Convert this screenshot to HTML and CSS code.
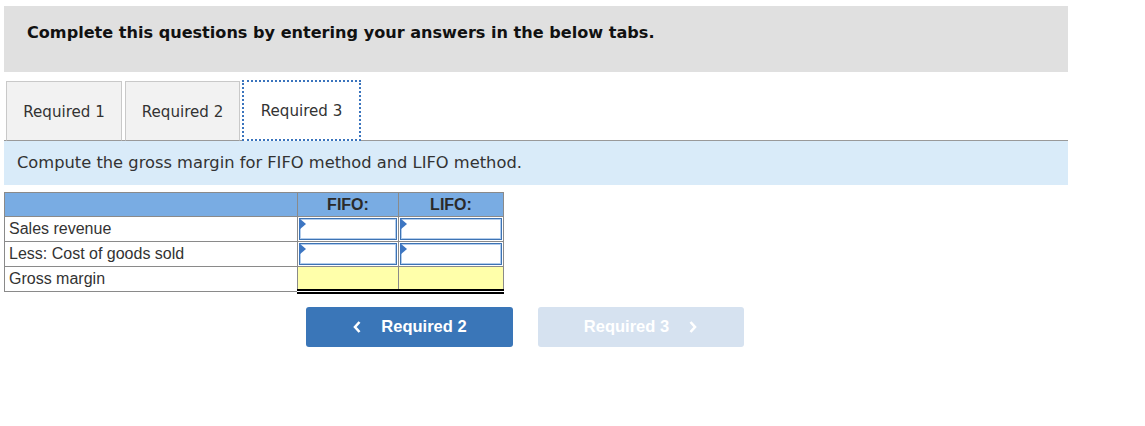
FILE: index.html
```html
<!DOCTYPE html>
<html>
<head>
<meta charset="utf-8">
<link rel="stylesheet" href="styles.css">
</head>
<body>
<div class="page">
  <div class="header">Complete this questions by entering your answers in the below tabs.</div>
  <div class="tabs">
    <div class="tab t1">Required 1</div>
    <div class="tab t2">Required 2</div>
    <div class="tab t3 active">Required 3</div>
  </div>
  <div class="instr">Compute the gross margin for FIFO method and LIFO method.</div>
  <table class="grid">
    <tr class="head">
      <td class="label"></td>
      <td class="c1">FIFO:</td>
      <td class="c2">LIFO:</td>
    </tr>
    <tr>
      <td class="label">Sales revenue</td>
      <td class="in"><div class="box"><span class="tri"></span></div></td>
      <td class="in"><div class="box"><span class="tri"></span></div></td>
    </tr>
    <tr>
      <td class="label">Less: Cost of goods sold</td>
      <td class="in"><div class="box"><span class="tri"></span></div></td>
      <td class="in"><div class="box"><span class="tri"></span></div></td>
    </tr>
    <tr>
      <td class="label">Gross margin</td>
      <td class="total"></td>
      <td class="total"></td>
    </tr>
  </table>
  <div class="nav">
    <div class="btn prev">
      <svg width="10" height="14" viewBox="0 0 10 14"><path d="M7.5 2 L3 7 L7.5 12" fill="none" stroke="#fff" stroke-width="2.6"/></svg>
      <span>Required 2</span>
    </div>
    <div class="btn next">
      <span>Required 3</span>
      <svg width="10" height="14" viewBox="0 0 10 14"><path d="M2.5 2 L7 7 L2.5 12" fill="none" stroke="#fff" stroke-width="2.6"/></svg>
    </div>
  </div>
</div>
</body>
</html>
```
FILE: styles.css
```css
html, body {
  margin: 0;
  padding: 0;
  background: #fff;
}
.page {
  padding: 6px 0 0 4px;
  width: 1064px;
  font-family: "DejaVu Sans", Verdana, sans-serif;
  color: #222;
}
.header {
  background: #e0e0e0;
  height: 66px;
  box-sizing: border-box;
  padding: 17px 0 0 23px;
  font-size: 16.1px;
  font-weight: bold;
  color: #111;
}
.tabs {
  display: flex;
  margin-top: 9px;
  padding-left: 2px;
  border-bottom: 1px solid #999;
  height: 59px;
}
.tab {
  box-sizing: border-box;
  height: 60px;
  margin-bottom: -1px;
  background: #f2f2f2;
  border: 1px solid #c9c9c9;
  border-bottom: 1px solid #999;
  display: flex;
  align-items: center;
  justify-content: center;
  font-size: 15.1px;
  color: #333;
  padding-top: 1px;
}
.t1 { width: 116px; }
.t2 { width: 115px; margin-left: 3px; }
.t3 { width: 119px; margin-left: 2px; }
.tab.active {
  background: #fff;
  border: 2px dotted #3a74bd;
  height: 61px;
  margin-top: -1px;
}
.instr {
  background: #d9ebf9;
  height: 44px;
  box-sizing: border-box;
  padding: 12px 0 0 13px;
  font-size: 16.3px;
  color: #333;
}
.grid {
  margin-top: 7px;
  border-collapse: collapse;
  font-family: "Liberation Sans", Arial, sans-serif;
  font-size: 16px;
  color: #333;
}
.grid td {
  border: 1px solid #8a8a8a;
  height: 24.3px;
  padding: 0;
  box-sizing: border-box;
}
.grid .label {
  width: 293px;
  padding-left: 4px;
  background: #fff;
}
.grid .head td {
  background: #79ace3;
  font-weight: bold;
  text-align: center;
  color: #2a2a2a;
}
.grid .head .label { background: #79ace3; }
.c1 { width: 101px; }
.c2 { width: 105px; }
.grid .in {
  padding: 1px;
  background: #fff;
}
.box {
  position: relative;
  height: 22px;
  box-sizing: border-box;
  border: 1px solid #3d73b4;
  box-shadow: inset 0 0 0 1px #b3cdec;
  background: #fff;
}
.tri {
  position: absolute;
  left: -1px;
  top: -1px;
  width: 0;
  height: 0;
  border-top: 6px solid transparent;
  border-bottom: 6px solid transparent;
  border-left: 7px solid #3d76c2;
}
.grid .total {
  background: #ffffaa;
  border-bottom: 5px double #000;
}
.nav {
  display: flex;
  margin: 13px 0 0 302px;
  gap: 25px;
}
.btn {
  width: 207px;
  height: 40px;
  border-radius: 3px;
  display: flex;
  align-items: center;
  justify-content: center;
  gap: 19px;
  font-family: "Liberation Sans", Arial, sans-serif;
  font-size: 16.5px;
  font-weight: bold;
  color: #fff;
}
.prev { background: #3a76b8; }
.next { background: #d6e2f0; width: 206px; }
```
